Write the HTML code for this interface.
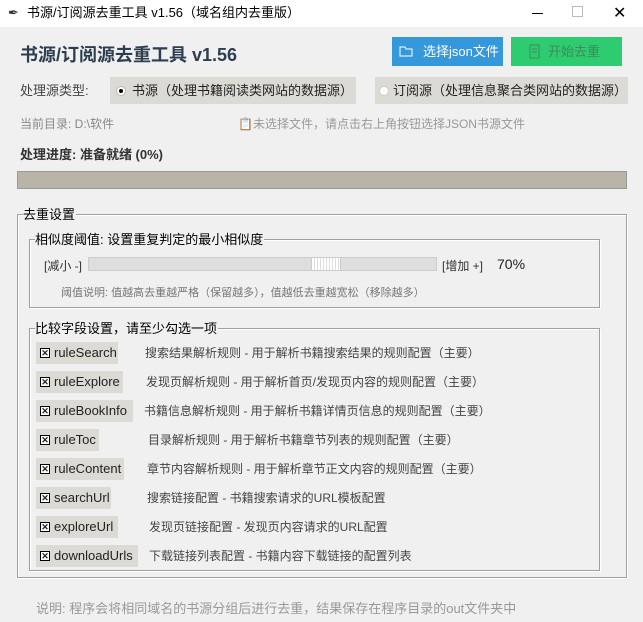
<!DOCTYPE html>
<html><head><meta charset="utf-8"><style>
*{margin:0;padding:0;box-sizing:border-box}
body{width:643px;height:622px;background:#f0f0f0;font-family:"Liberation Sans","Noto Sans CJK SC",sans-serif;position:relative;overflow:hidden;color:#222}
.a{position:absolute;white-space:nowrap}
.t{font-size:13px;line-height:16px}
.frame{position:absolute;border:1px solid #a0a0a0;box-shadow:inset 1px 1px 0 #fff,1px 1px 0 #fff}
.lbl{position:absolute;background:#f0f0f0;font-size:13px;line-height:14px;padding-right:1px;white-space:nowrap}
.cb{position:absolute;left:36px;height:22px;background:#dcdad5;font-size:13px;line-height:22px;padding-left:4px;color:#222;white-space:nowrap}
.cb i{position:absolute;left:4px;top:6px;width:10px;height:10px;border:1px solid #000;background:#fff;font-style:normal;font-size:9px;line-height:8px;text-align:center;font-weight:bold}
.cb span{margin-left:14px}
.d{position:absolute;font-size:12px;line-height:22px;color:#444;white-space:nowrap}
</style></head><body>
<div class="a" style="left:0;top:0;width:643px;height:27px;background:#fff"></div>
<div class="a" style="left:8px;top:5px;font-size:13px;color:#333">&#x2712;</div>
<div class="a t" style="left:27px;top:5px;color:#000">书源/订阅源去重工具 v1.56（域名组内去重版）</div>
<div class="a" style="left:532px;top:13px;width:11px;height:1px;background:#000"></div>
<div class="a" style="left:572px;top:6px;width:11px;height:11px;border:1px solid #bbb"></div>
<div class="a" style="left:613px;top:3px;font-size:16px;color:#000">✕</div>

<div class="a" style="left:20px;top:41px;font-size:18px;font-weight:bold;color:#2c3e50">书源/订阅源去重工具 v1.56</div>
<div class="a" style="left:392px;top:37px;width:111px;height:29px;background:#3498db;color:#fff;font-size:13px;line-height:29px;padding-left:31px">选择json文件</div>
<svg class="a" style="left:399px;top:45px" width="15" height="13"><path d="M1 2h5l1 2h6v7H1z" fill="none" stroke="#fff"/></svg>
<div class="a" style="left:511px;top:37px;width:111px;height:29px;background:#2ecc71;color:#3d8a5a;font-size:13px;line-height:29px;padding-left:37px">开始去重</div>
<svg class="a" style="left:529px;top:44px" width="14" height="15"><path d="M1 1h9v13H1z M3 5h5M3 8h5" fill="none" stroke="#3d8a5a"/></svg>

<div class="a t" style="left:20px;top:83px;color:#444">处理源类型:</div>
<div class="a t" style="left:110px;top:77px;width:246px;height:27px;background:#dcdad5;line-height:27px;padding-left:22px">书源（处理书籍阅读类网站的数据源）</div>
<div class="a" style="left:116px;top:86px;width:10px;height:10px;border-radius:50%;background:#fff;border:1px solid #bbb"></div>
<div class="a" style="left:119px;top:89px;width:4px;height:4px;border-radius:50%;background:#000"></div>
<div class="a t" style="left:375px;top:77px;width:253px;height:27px;background:#dcdad5;line-height:27px;padding-left:18px">订阅源（处理信息聚合类网站的数据源）</div>
<div class="a" style="left:379px;top:86px;width:10px;height:10px;border-radius:50%;background:#fff;border:1px solid #ccc"></div>

<div class="a" style="left:20px;top:115px;font-size:12px;color:#888">当前目录: D:\软件</div>
<div class="a" style="left:238px;top:115px;font-size:12px;color:#999">&#x1F4CB;未选择文件，请点击右上角按钮选择JSON书源文件</div>

<div class="a t" style="left:20px;top:147px;font-weight:bold;color:#333">处理进度: 准备就绪 (0%)</div>
<div class="a" style="left:17px;top:171px;width:610px;height:18px;background:#b8b4a8;border:1px solid #999"></div>

<div class="frame" style="left:17px;top:214px;width:610px;height:364px"></div>
<div class="lbl" style="left:23px;top:208px;color:#000">去重设置</div>

<div class="frame" style="left:29px;top:239px;width:571px;height:69px"></div>
<div class="lbl" style="left:35px;top:233px;color:#000">相似度阈值: 设置重复判定的最小相似度</div>
<div class="a" style="left:44px;top:257px;font-size:12px;color:#333">[减小 -]</div>
<div class="a" style="left:88px;top:257px;width:349px;height:14px;background:#dedede;border:1px solid #ccc"></div>
<div class="a" style="left:311px;top:257px;width:30px;height:14px;background:repeating-linear-gradient(90deg,#fff 0 2px,#ddd 2px 3px);border:1px solid #ccc"></div>
<div class="a" style="left:442px;top:257px;font-size:12px;color:#333">[增加 +]</div>
<div class="a" style="left:497px;top:256px;font-size:14px;color:#222">70%</div>
<div class="a" style="left:61px;top:284px;font-size:11px;color:#777">阈值说明: 值越高去重越严格（保留越多），值越低去重越宽松（移除越多）</div>

<div class="frame" style="left:29px;top:328px;width:571px;height:243px"></div>
<div class="lbl" style="left:35px;top:322px;color:#000">比较字段设置，请至少勾选一项</div>

<div class="cb" style="top:342px;width:82px"><i>✕</i><span>ruleSearch</span></div><div class="d" style="left:145px;top:342px">搜索结果解析规则 - 用于解析书籍搜索结果的规则配置（主要）</div>
<div class="cb" style="top:371px;width:87px"><i>✕</i><span>ruleExplore</span></div><div class="d" style="left:146px;top:371px">发现页解析规则 - 用于解析首页/发现页内容的规则配置（主要）</div>
<div class="cb" style="top:400px;width:97px"><i>✕</i><span>ruleBookInfo</span></div><div class="d" style="left:144px;top:400px">书籍信息解析规则 - 用于解析书籍详情页信息的规则配置（主要）</div>
<div class="cb" style="top:429px;width:63px"><i>✕</i><span>ruleToc</span></div><div class="d" style="left:148px;top:429px">目录解析规则 - 用于解析书籍章节列表的规则配置（主要）</div>
<div class="cb" style="top:458px;width:88px"><i>✕</i><span>ruleContent</span></div><div class="d" style="left:147px;top:458px">章节内容解析规则 - 用于解析章节正文内容的规则配置（主要）</div>
<div class="cb" style="top:487px;width:75px"><i>✕</i><span>searchUrl</span></div><div class="d" style="left:147px;top:487px">搜索链接配置 - 书籍搜索请求的URL模板配置</div>
<div class="cb" style="top:516px;width:82px"><i>✕</i><span>exploreUrl</span></div><div class="d" style="left:149px;top:516px">发现页链接配置 - 发现页内容请求的URL配置</div>
<div class="cb" style="top:545px;width:102px"><i>✕</i><span>downloadUrls</span></div><div class="d" style="left:149px;top:545px">下载链接列表配置 - 书籍内容下载链接的配置列表</div>

<div class="a" style="left:36px;top:598px;font-size:13px;color:#999">说明: 程序会将相同域名的书源分组后进行去重，结果保存在程序目录的out文件夹中</div>
</body></html>
